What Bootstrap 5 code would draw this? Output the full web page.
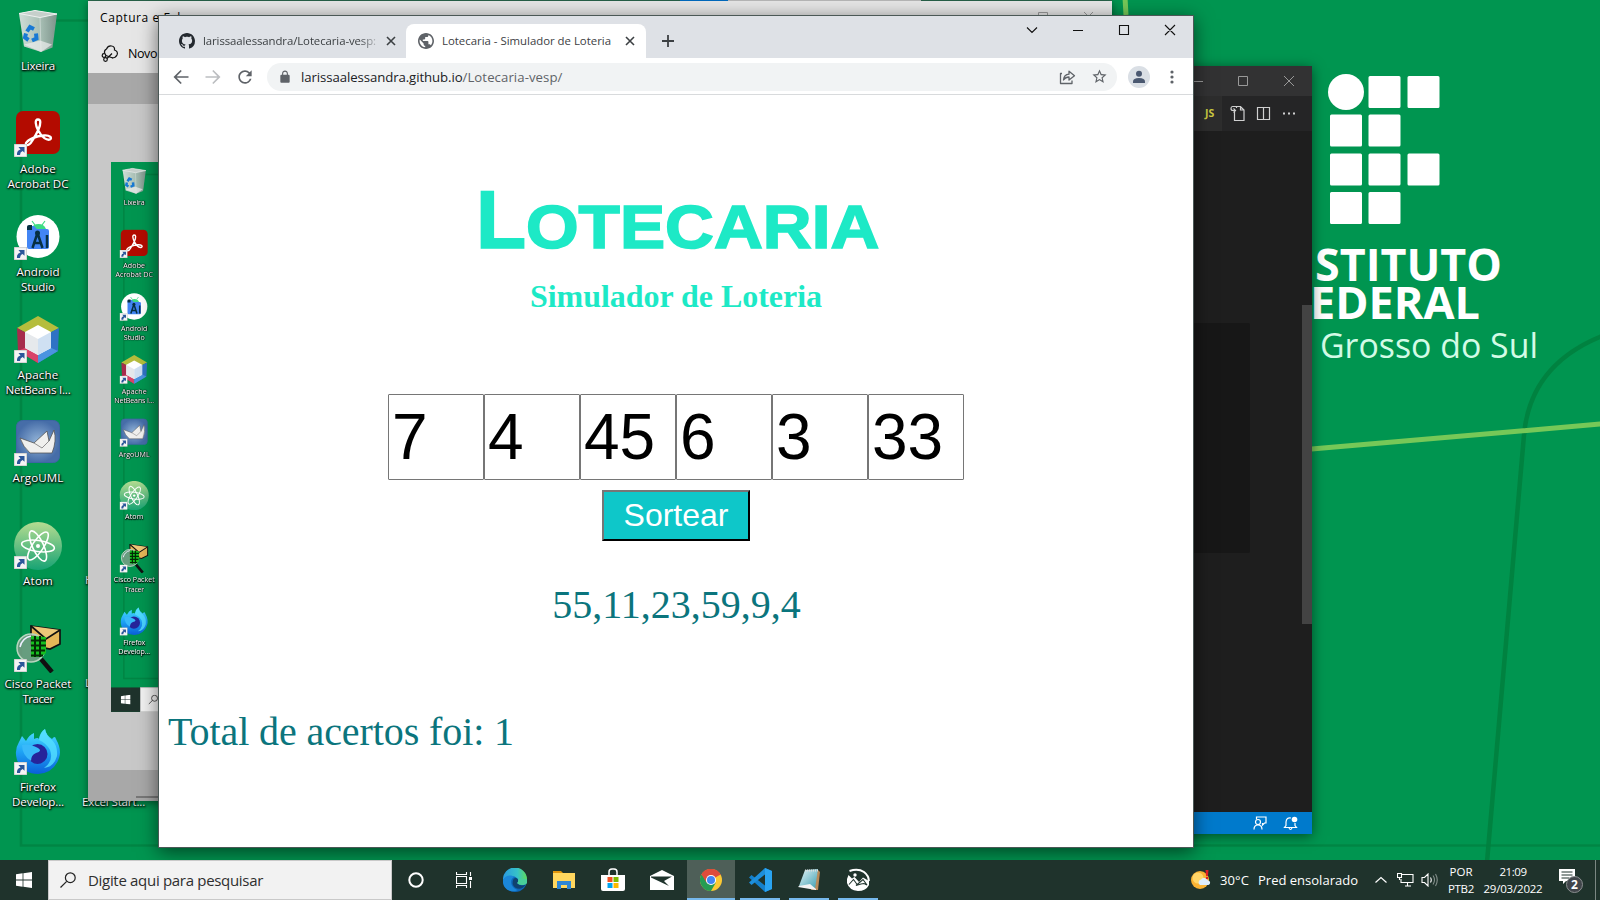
<!DOCTYPE html>
<html lang="pt-BR">
<head>
<meta charset="utf-8">
<title>Lotecaria - Simulador de Loteria</title>
<link href="https://cdn.jsdelivr.net/npm/bootstrap@5.3.0/dist/css/bootstrap.min.css" rel="stylesheet">
<style>
:root{--ui:"Open Sans","Noto Sans",sans-serif}
body{width:1600px;height:900px;overflow:hidden;background:#009550;font-family:var(--ui);font-size:12px;color:#000}
svg{display:block;flex:none}
.desk{width:1600px;height:860px;overflow:hidden}
.win{position:absolute;overflow:hidden}
.shots{width:76px;padding-top:7px}
.shot{height:103px;color:#fff;line-height:15px;text-align:center;font-size:11.6px;text-shadow:0 1px 2px #000,1px 1px 2px #000,0 0 2px rgba(0,0,0,.7);white-space:nowrap}
.shot .lbl{display:inline-block}
.shot .pic{height:48px;margin-bottom:3px}
.under{position:absolute;color:#fff;text-shadow:0 1px 2px #000,1px 1px 2px #000;line-height:15px;font-size:11.6px;white-space:nowrap}
.snip{left:88px;top:1px;width:1024px;height:800px;background:#c8c8c8;box-shadow:0 2px 8px rgba(0,0,0,.45)}
.snip-head{height:72px;background:#e6e6e6}
.snip-band{height:31px;background:#a8a8a8}
.snip-foot{height:31px;background:#a8a8a8}
.mini{position:absolute;left:23px;top:161px;width:600px;height:550px;overflow:hidden;background:#009550}
.mini-in{width:1600px;height:900px;transform:scale(.611);transform-origin:0 0}
.code{left:1000px;top:66px;width:312px;height:768px;background:#1e1e1e;box-shadow:0 2px 12px rgba(0,0,0,.5)}
.code-title{height:30px;background:#323233}
.code-tabs{height:35px;background:#252526}
.code-js{width:29px;background:#2d2d2d;color:#cbcb41;font:bold 10.5px/34px "Open Sans",sans-serif}
.code-map{position:absolute;left:0;top:257px;width:250px;height:230px;background:#171717;border-radius:2px}
.code-bar{position:absolute;right:0;top:239px;width:10px;height:319px;background:#434343}
.code-status{height:22px;background:#007acc}
.chrome{left:158px;top:15px;width:1036px;height:833px;background:#fff;border:1px solid #4b5856;box-shadow:0 4px 18px rgba(0,0,0,.55)}
.strip{height:42px;background:#dee1e6;color:#3c4043}
.ctab{height:34px;font-size:11.4px;white-space:nowrap}
.ctab.live{width:240px;background:#fff;border-radius:8px 8px 0 0}
.bar{height:36px;padding-top:1px}
.omni{width:850px;height:28px;border-radius:14px;background:#f1f3f4;font-size:13.2px;line-height:18px;color:#5f6368;white-space:nowrap}
.omni b{font-weight:400;color:#202124}
.site{border-top:1px solid #d8dadc;height:753px;font-family:"Liberation Serif",serif;color:#0b757d}
.title{font:bold 82px/90px "Liberation Sans",sans-serif;color:#1de9c6;margin:80px 0 0;height:90px;padding-left:2px;-webkit-text-stroke:1.6px #1de9c6}
.title span{display:inline-block;font-size:61.5px;transform:scaleX(1.1);transform-origin:0 0;width:352px;text-align:left;white-space:nowrap}
.subt{font-size:32px;line-height:36px;font-weight:bold;color:#1de9c6;margin:13px 0 0}
.num{width:96px;height:86px;border:1px solid #767676;border-radius:1px;padding:1px 2px 1px 3px;font:64px "Liberation Sans",sans-serif;color:#000;background:#fff}
.draw{margin-top:10px;width:148px;height:51px;padding:0;border:2px outset #000;border-color:#767676 #212121 #212121 #767676;background:#0ec7c9;color:#fff;font:32px "Liberation Sans",sans-serif}
.out{font-size:40px;line-height:46px;margin:0}
.task{width:1600px;height:40px;background:#1f332c;color:#fff}
.search{width:344px;height:40px;background:#f2f2f2;border:1px solid #c9c9c9;color:#2e2e2e;font-size:15px;white-space:nowrap}
.ti{width:48px;height:40px;margin-right:1px;position:relative}
.ti.on::after{content:"";position:absolute;left:4px;right:4px;bottom:0;height:2px;background:#76b9ed}
.ti.cur{background:#4e5f58}.ti.cur::after{left:0;right:0}
.tray{font-size:11.5px;white-space:nowrap}
</style>
</head>
<body>
<svg width="0" height="0" class="position-absolute">
<defs>
<linearGradient id="gBin" x1="0" x2="1"><stop offset="0" stop-color="#dfe3e2"/><stop offset=".55" stop-color="#b5c3bd"/><stop offset="1" stop-color="#86938f"/></linearGradient>
<linearGradient id="gAtom" x1="0" y1="0" x2="0" y2="1"><stop offset="0" stop-color="#b5dc91"/><stop offset="1" stop-color="#17a374"/></linearGradient>
<radialGradient id="gArgo"><stop offset="0" stop-color="#93b4d8"/><stop offset="1" stop-color="#466da8"/></radialGradient>
<linearGradient id="gFox" x1="0" y1="0" x2="0" y2="1"><stop offset="0" stop-color="#4fe0ff"/><stop offset=".5" stop-color="#1ea4f5"/><stop offset="1" stop-color="#0a5fd8"/></linearGradient>
<linearGradient id="gEdge" x1="0" y1="0" x2="1" y2="0"><stop offset="0" stop-color="#2a9ae0"/><stop offset=".6" stop-color="#36c2c8"/><stop offset="1" stop-color="#5fdc5a"/></linearGradient>
<linearGradient id="gNote" x1="0" y1="0" x2="1" y2="1"><stop offset="0" stop-color="#e6f6f8"/><stop offset="1" stop-color="#3a9db0"/></linearGradient>
<symbol id="link" viewBox="0 0 13 13"><rect width="13" height="13" fill="#f4f4f4" stroke="#b5b5b5"/><path d="M3 11Q2.500 6.500 6.500 5.500L4.500 3H10.500V8.800L8.600 7Q6 8 6 11Z" fill="#2b579a"/></symbol>
<symbol id="i-bin" viewBox="0 0 48 48"><g transform="translate(0 1.500)"><path d="M5 5 21 2 43 5.500 38.500 39 27 43.500 10 38Z" fill="url(#gBin)" fill-opacity=".93"/><path d="M5 5 21 2 43 5.500 26 9Z" fill="#c6cfcb" stroke="#eef1f0"/><path d="M26 9 27 43" stroke="#dfe5e3" stroke-width="1" opacity=".6"/><path d="M10 36 26 32 38 36 27 43.500Z" fill="#eee" opacity=".7"/><g fill="none" stroke="#1779d4" stroke-width="4"><path d="M13 23 16 18.500 20 20.500M22 25 22.500 30 18 32M14.500 31.500 11 29 12 25"/></g></g></symbol>
<symbol id="i-pdf" viewBox="0 0 48 48"><rect x="2" y="1" width="44" height="43" rx="7" fill="#b30b00"/><path d="M24 9.500C20.500 9.500 21.500 15 24 20 28 28 33 30.500 36 29.500 38.500 28 36 25 30 25.500 22 26 14 29.500 12 33 11 36 15 36.500 18 31 22 25 26.500 16 26.300 12 26.200 10 25.500 9.500 24 9.500Z" fill="none" stroke="#fff" stroke-width="2.300"/></symbol>
<symbol id="i-as" viewBox="0 0 48 48"><circle cx="24" cy="23.500" r="21.500" fill="#fff"/><path d="M17 16a8 7.500 0 0 1 15 0Z" fill="#3ddc84"/><path d="m18 8 3 4M31 8l-3 4" stroke="#3ddc84" stroke-width="1.200"/><path d="M13 17.500V15q0-2 2-2h5l3 3h10q2 0 2 2v16q0 2-2 2H15q-2 0-2-2Z" fill="#4285f4"/><path d="M13 17v-3q0-2 2-2h3v5Z" fill="#073042"/><path d="M23.500 20 18.500 35M23.500 20 28.500 35M19.500 30h8" fill="none" stroke="#073042" stroke-width="2.500"/><circle cx="23.500" cy="20" r="2.500" fill="#073042"/><path d="M33 22v13" stroke="#073042" stroke-width="2.500"/></symbol>
<symbol id="i-nb" viewBox="0 0 48 48"><path d="M24 0 45 12 24 23 3 12Z" fill="#b5bd3c"/><path d="M3 12 24 23V47L4 35Z" fill="#a72c4c"/><path d="M45 12 24 23V47L44 35Z" fill="#2f72c4"/><path d="M4 35 24 26V47Z" fill="#d94469"/><path d="M44 35 24 26V47Z" fill="#4b94e0"/><path d="M24 9 37 16V32L24 39 11 32V16Z" fill="#fff"/><path d="M24 23 37 16V32L24 39Z" fill="#cfe0f2"/><path d="M24 23 11 16V32L24 39Z" fill="#e6e9ec"/></symbol>
<symbol id="i-argo" viewBox="0 0 48 48"><rect x="2.500" y="1.500" width="43" height="42" rx="6" fill="url(#gArgo)" stroke="#3e66a3"/><path d="M6 19 20 24 33 12 35 22 40 11Q43 22 38 34H16Q9 28 6 19Z" fill="#f0f0ee" stroke="#555" stroke-width=".8"/><path d="M20 24 28 29 35 22" fill="none" stroke="#777" stroke-width=".8"/></symbol>
<symbol id="i-atom" viewBox="0 0 48 48"><circle cx="24" cy="24" r="24" fill="url(#gAtom)"/><g fill="none" stroke="#fff" stroke-width="1.600"><ellipse cx="24" cy="24" rx="16.500" ry="5.500" transform="rotate(8 24 24)"/><ellipse cx="24" cy="24" rx="16.500" ry="5.500" transform="rotate(65 24 24)"/><ellipse cx="24" cy="24" rx="16.500" ry="5.500" transform="rotate(-56 24 24)"/></g><circle cx="24" cy="24" r="2" fill="#fff"/></symbol>
<symbol id="i-cisco" viewBox="0 0 48 48"><path d="M17 1 46 5V19L36 24 17 20Z" fill="#e6b758" stroke="#111" stroke-width="1.700"/><path d="M17 1 32 14 46 5" fill="#edc878" stroke="#111" stroke-width="1.700"/><path d="m27 34 11 13" stroke="#111" stroke-width="4.500"/><circle cx="17" cy="23" r="14" fill="#8aa08f" fill-opacity=".75" stroke="#b8d5bf" stroke-width="1.500"/><path d="M17 11 32 12V28L27 32H17Z" fill="#16c020"/><path d="M17 15.500H32M17 20.500H32M17 25.500H31M17 30.500H29M21 11V32M26 11V32" stroke="#032b05" stroke-width="2"/><path d="M6 22Q8 13 17 11" stroke="#eef" stroke-width="1.500" fill="none"/></symbol>
<symbol id="i-fox" viewBox="0 0 48 48"><path d="M5 14 8 8 12 13Q15 7 20 5L20 11Q24 9 25 11 26 4 31 1 32 7 38 11 41 7 42 11 48 22 45 30 40 45 24 46 9 46 3 32 0 22 5 14Z" fill="url(#gFox)"/><path d="M31 1Q32 8 38 12 44 18 43 28 40 39 30 40 40 33 36 22 32 15 25 12 26 5 31 1Z" fill="#55e0ff" opacity=".8"/><circle cx="23.500" cy="26" r="10" fill="#26249a"/><path d="M8 17Q15 15 24 20 29 23 22 25 17 27 17 33 8 27 8 17Z" fill="#39b9fa"/></symbol>
<symbol id="i-win" viewBox="0 0 16 16"><path d="M0 2.200 6.600 1.300V7.600H0ZM7.400 1.200 16 0V7.600H7.400ZM0 8.400H6.600V14.700L0 13.800ZM7.400 8.400H16V16L7.400 14.800Z" fill="#fff"/></symbol>
<symbol id="i-mag" viewBox="0 0 16 16"><circle cx="10.300" cy="5.700" r="4.900" fill="none" stroke="#222" stroke-width="1.200"/><path d="M6.700 9.300.5 15.500" stroke="#222" stroke-width="1.200"/></symbol>
</defs>
</svg>

<div class="desk position-relative">
  <svg class="position-absolute top-0 start-0" width="1600" height="860">
    <g fill="none" stroke="#007f3e" stroke-opacity=".7"><path d="M1600 845.500H21V20.500H90" stroke-width="2.500"/><path d="M1487 862 1524 435Q1530 365 1602 336" stroke-width="4.500" stroke-opacity=".9"/></g>
    <path d="M1120-90 1126 15M1300 450 1601 424" stroke="#76c858" stroke-width="5" fill="none"/>
    <g fill="#fff">
      <circle cx="1346" cy="92" r="18"/>
      <path stroke="#fff" stroke-width="3" stroke-linejoin="round" d="M1370 77.500h29v29h-29zM1409 77.500h29v29h-29zM1331.500 116h29v29h-29zM1370 116h29v29h-29zM1331.500 155h29v29h-29zM1370 155h29v29h-29zM1409 155h29v29h-29zM1331.500 193.500h29v29h-29zM1370 193.500h29v29h-29z"/>
      <g font-family="Open Sans" font-weight="700" font-size="44.500"><text x="1315" y="280.500" textLength="187" lengthAdjust="spacingAndGlyphs">STITUTO</text><text x="1310" y="318.500" textLength="170" lengthAdjust="spacingAndGlyphs">EDERAL</text></g>
      <text x="1320" y="357.500" font-family="Open Sans" font-weight="400" font-size="34.500" fill="#d3fbe6" textLength="218" lengthAdjust="spacingAndGlyphs">Grosso do Sul</text>
    </g>
  </svg>
  <div class="shots position-absolute top-0 start-0" id="shots"></div>
  <span class="under" style="left:85px;top:572px">H</span>
  <span class="under" style="left:85px;top:675px">L</span>
  <span class="under" style="left:82px;top:794px"><span data-w="63">Excel Start...</span></span>

  <svg class="position-absolute top-0" style="left:88px" width="1024" height="1"><path d="M0 0H1024V1H0Z" fill="#2d6d50"/><path d="M592 0h48v1h-48z" fill="#0078d7"/><path d="M640 0h193v1h-193z" fill="#d0d0d0"/></svg>
  <section class="win snip d-flex flex-column">
    <div class="snip-head">
      <div style="padding:8px 0 0 12px;line-height:17px;height:35px" class="d-flex justify-content-between"><span class="text-nowrap" data-w="107">Captura e Esboço</span>
        <svg width="152" height="22" fill="none" stroke="#999"><path d="M78.500 3.500h9v9h-9zM124 3l9 9M133 3l-9 9"/></svg></div>
      <div class="d-flex align-items-center" style="padding:0 0 0 13px;height:34px">
        <svg width="18" height="18" viewBox="0 0 18 18" fill="none" stroke="#111" stroke-width="1.200"><path d="M3.500 9.500Q3 6 5.500 5 7 1.500 10.500 2 14 2.500 13.500 6 17.500 7.500 16 11 14.500 14 11 14"/><circle cx="3" cy="11.500" r="1.800"/><circle cx="4.500" cy="15.500" r="1.800"/><path d="m4.800 11.500 7 2.500M6 14.500l5-5"/></svg>
        <span style="font-size:12.500px;margin:2px 0 0 9px" data-w="29">Novo</span></div>
    </div>
    <div class="snip-band"></div>
    <div class="flex-grow-1"></div>
    <div class="snip-foot d-flex align-items-end"><svg width="200" height="5"><path d="M48 1h152" stroke="#777" stroke-width="2"/></svg></div>
    <div class="mini"><div class="mini-in d-flex flex-column">
      <div class="desk position-relative" style="flex:none"><svg class="position-absolute top-0 start-0" width="200" height="860"><path d="M200 845.500H21V20.500H200" fill="none" stroke="#007f3e" stroke-opacity=".7" stroke-width="2.500"/></svg><div class="shots position-relative" id="shotsMini"></div></div>
      <div class="task d-flex"><div class="ti d-flex align-items-center justify-content-center me-0"><svg width="16" height="16"><use href="#i-win"/></svg></div><div class="search d-flex align-items-center ps-2"><svg class="ms-1" width="16" height="16"><use href="#i-mag"/></svg></div></div>
    </div></div>
  </section>

  <section class="win code d-flex flex-column">
    <div class="code-title"><svg width="312" height="30" fill="none" stroke="#999"><path d="M193 15.500h10M238.500 10.500h9v9h-9zM284 10l10 10M294 10l-10 10"/></svg></div>
    <div class="code-tabs d-flex justify-content-end">
      <div class="code-js" style="padding-left:12px">JS</div>
      <svg width="90" height="35" fill="none" stroke="#d0d0d0" stroke-width="1.200"><path d="M12.500 16v8.500H22V14l-3.500-3.500H14M18.500 10.500V14H22M14.500 12V10.500H10.500Q9 10.500 9 12.500T11 14.500h2M11.500 12.500l2 2-2 2M35.500 11.500h12v12h-12zM41.500 11.500v12"/><path stroke-width="2" stroke-dasharray="2 3" d="M61 17.500h13"/></svg>
    </div>
    <div class="code-map"></div><div class="code-bar"></div>
    <div class="flex-grow-1"></div>
    <div class="code-status d-flex justify-content-end"><svg width="65" height="22" fill="none" stroke="#fff" stroke-width="1.200"><circle cx="11" cy="10" r="2.500"/><path d="M7 17.500q0-4.500 4-4.500t4 4.500M9.500 7.500V5H19v6h-1.500l-2 2V11"/><path d="M44 6q-4.500-1-5 4v3.500l-1.500 2h12l-1.500-2V11M42 16q1.500 3 3 0"/><circle cx="47.500" cy="7.500" r="2.800" fill="#fff" stroke="none"/></svg></div>
  </section>

  <section class="win chrome">
    <div class="strip d-flex">
      <div class="ctab d-flex align-items-center align-self-end" style="width:247px;padding-left:20px">
        <svg width="16" height="16" viewBox="0 0 16 16" fill="#24292f"><path d="M8 0C3.580 0 0 3.580 0 8c0 3.540 2.290 6.530 5.470 7.590.4.070.55-.17.55-.38 0-.19-.01-.82-.01-1.490-2.010.37-2.530-.49-2.690-.94-.09-.23-.48-.94-.82-1.130-.28-.15-.68-.52-.01-.53.63-.01 1.080.58 1.230.82.72 1.210 1.870.87 2.330.66.070-.52.28-.87.51-1.070-1.780-.2-3.640-.89-3.640-3.950 0-.87.31-1.590.82-2.150-.08-.2-.36-1.020.08-2.120 0 0 .67-.21 2.200.82.64-.18 1.320-.27 2-.27.68 0 1.360.09 2 .27 1.530-1.040 2.200-.82 2.200-.82.44 1.100.16 1.920.08 2.120.51.56.82 1.270.82 2.150 0 3.070-1.870 3.750-3.650 3.950.29.25.54.73.54 1.480 0 1.070-.01 1.930-.01 2.200 0 .21.15.46.55.38A8.012 8.012 0 0 0 16 8c0-4.420-3.580-8-8-8z"/></svg>
        <span class="ms-2" data-w="173" style="-webkit-mask-image:linear-gradient(90deg,#000 90%,rgba(0,0,0,.25))">larissaalessandra/Lotecaria-vesp:</span>
        <svg class="ms-auto" style="margin-right:10px" width="10" height="10" stroke="#3c4043" stroke-width="1.600"><path d="m1 1 8 8M9 1 1 9"/></svg>
      </div>
      <div class="ctab live d-flex align-items-center align-self-end" style="padding-left:12px">
        <svg width="16" height="16" viewBox="2 2 20 20" fill="#5f6368"><path d="M12 2C6.480 2 2 6.480 2 12s4.480 10 10 10 10-4.480 10-10S17.520 2 12 2zm-1 17.930c-3.950-.49-7-3.850-7-7.930 0-.62.08-1.210.21-1.790L9 15v1c0 1.100.9 2 2 2v1.930zm6.900-2.540c-.26-.81-1-1.390-1.900-1.390h-1v-3c0-.55-.45-1-1-1H8v-2h2c.55 0 1-.45 1-1V7h2c1.100 0 2-.9 2-2v-.41c2.930 1.190 5 4.060 5 7.410 0 2.080-.8 3.970-2.100 5.390z"/></svg>
        <span class="ms-2" data-w="169">Lotecaria - Simulador de Loteria</span>
        <svg class="ms-auto" style="margin-right:11px" width="10" height="10" stroke="#3c4043" stroke-width="1.600"><path d="m1 1 8 8M9 1 1 9"/></svg>
      </div>
      <svg class="align-self-end" style="margin:0 0 11px 16px" width="12" height="12" stroke="#3c4043" stroke-width="1.800"><path d="M6 0V12M0 6H12"/></svg>
      <svg class="ms-auto" width="170" height="28" fill="none" stroke="#111" stroke-width="1.100"><path d="m4 11.500 5 5 5-5M50 14.500h10M96.500 9.500h9v9h-9zM142 9l10 10M152 9l-10 10"/></svg>
    </div>
    <div class="bar d-flex align-items-center">
      <svg style="margin-left:12px" width="20" height="20" viewBox="0 0 24 24" fill="#5f6368"><path d="M21 11H6.830l6.090-6.090L11.500 3.500l-8.500 8.500 8.500 8.500 1.410-1.410L6.830 13H21v-2z"/></svg>
      <svg style="margin-left:12px" width="20" height="20" viewBox="0 0 24 24" fill="#bcbec1"><path transform="matrix(-1 0 0 1 24 0)" d="M21 11H6.830l6.090-6.090L11.500 3.500l-8.500 8.500 8.500 8.500 1.410-1.410L6.830 13H21v-2z"/></svg>
      <svg style="margin-left:12px" width="20" height="20" viewBox="0 0 24 24" fill="#5f6368"><path d="M17.650 6.350A7.958 7.958 0 0 0 12 4c-4.420 0-7.990 3.580-7.990 8s3.570 8 7.990 8c3.730 0 6.840-2.550 7.730-6h-2.080A5.990 5.990 0 0 1 12 18c-3.310 0-6-2.690-6-6s2.690-6 6-6c1.660 0 3.140.69 4.220 1.780L13 11h7V4l-2.350 2.350z"/></svg>
      <div class="omni d-flex align-items-center" style="margin-left:12px">
        <svg style="margin-left:11px" width="14" height="14" viewBox="0 0 24 24" fill="#5f6368"><path d="M18 8h-1V6c0-2.760-2.240-5-5-5S7 3.240 7 6v2H6c-1.100 0-2 .9-2 2v10c0 1.100.9 2 2 2h12c1.100 0 2-.9 2-2V10c0-1.100-.9-2-2-2zM8.900 6c0-1.710 1.390-3.100 3.100-3.100s3.100 1.390 3.100 3.100v2H8.900V6z"/></svg>
        <span style="margin-left:9px"><b data-w="161.500">larissaalessandra.github.io</b><span data-w="100">/Lotecaria-vesp/</span></span>
        <svg class="ms-auto" width="17" height="16" viewBox="0 0 17 16" fill="none" stroke="#5f6368" stroke-width="1.300"><path d="M3 4.500H1.500V14.500H13V11.500M4.500 11Q5 5.500 10 5.200V2.200L15.500 6.700 10 11V8Q6.500 8 4.500 11Z" stroke-linejoin="round"/></svg>
        <svg style="margin:0 9px 0 15px" width="17" height="17" viewBox="0 0 24 24" fill="#5f6368"><path d="M22 9.240l-7.190-.62L12 2 9.190 8.630 2 9.240l5.460 4.730L5.820 21 12 17.270 18.180 21l-1.630-7.030L22 9.240zM12 15.400l-3.760 2.270 1-4.280-3.320-2.880 4.380-.38L12 6.100l1.710 4.040 4.380.38-3.320 2.880 1 4.280L12 15.400z"/></svg>
      </div>
      <svg style="margin-left:11px" width="22" height="22"><circle cx="11" cy="11" r="11" fill="#dadfe5"/><circle cx="11" cy="7.800" r="3" fill="#4a5870"/><path d="M5 17v-1.500q0-3.500 6-3.500t6 3.500V17Z" fill="#4a5870"/></svg>
      <svg style="margin-left:20px" width="4" height="16" fill="#5f6368"><circle cx="2" cy="3" r="1.600"/><circle cx="2" cy="8" r="1.600"/><circle cx="2" cy="13" r="1.600"/></svg>
    </div>
    <main class="site d-flex flex-column align-items-center">
      <h1 class="title text-nowrap">L<span>OTECARIA</span></h1>
      <h2 class="subt"><span data-w="292">Simulador de Loteria</span></h2>
      <form class="d-flex" style="margin-top:80px" onsubmit="return false">
        <input class="num" value="7"><input class="num" value="4"><input class="num" value="45"><input class="num" value="6"><input class="num" value="3"><input class="num" value="33">
      </form>
      <button class="draw" type="button">Sortear</button>
      <p class="out" style="margin-top:41px;padding-left:1px">55,11,23,59,9,4</p>
      <p class="out align-self-start" style="margin:81px 0 0 9px"><span data-w="346">Total de acertos foi: 1</span></p>
    </main>
  </section>
</div>

<footer class="task d-flex">
  <div class="ti me-0 d-flex align-items-center justify-content-center"><svg width="16" height="16"><use href="#i-win"/></svg></div>
  <div class="search d-flex align-items-center"><svg style="margin-left:11px" width="16" height="16"><use href="#i-mag"/></svg><span style="margin-left:12px" data-w="175">Digite aqui para pesquisar</span></div>
  <div class="ti me-0 d-flex align-items-center justify-content-center"><svg width="18" height="18"><circle cx="9" cy="9" r="6.700" fill="none" stroke="#fff" stroke-width="2"/></svg></div>
  <div class="ti d-flex align-items-center justify-content-center" style="margin-right:3px"><svg width="17" height="16" fill="none" stroke="#fff" stroke-width="1.100"><path d="M.5 0V2.500H10.500V0M.5 4.500h10v7H.5zM.5 16V13.500H10.500V16M14.500 0V4M14.500 9V16"/><path d="M13 5h3v3h-3z" fill="#fff" stroke="none"/></svg></div>
  <div class="ti d-flex align-items-center justify-content-center"><svg width="24" height="24" viewBox="0 0 24 24"><circle cx="12" cy="12" r="12" fill="#0d66b8"/><path d="M0 12A12 12 0 0 1 24 11C24.300 16 19 17.500 15 16 13.500 15 15.500 14 15.200 12 14.500 8 5 6 0 12Z" fill="url(#gEdge)"/><path d="M0 12C3 6 9 7 12 9 6 10 7 20 15 22 6 26-1 19 0 12Z" fill="#1b87d8"/><path d="M10.500 11Q13 9 15 11.500 15.500 14 14 15 17 19 23 16.500 18 23 12 19.500 8 16 10.500 11Z" fill="#10426f"/><path d="M15.300 12.500Q15 14.500 14 15 17 18.500 23 16.200L24 15V11H16Z" fill="#48cf9a"/></svg></div>
  <div class="ti d-flex align-items-center justify-content-center"><svg width="22" height="20" viewBox="0 0 22 20"><path d="M0 1h8l2 2H0z" fill="#e0950c"/><path d="M0 3h22v15H0Z" fill="#ffd75e"/><path d="M4 19v-8h14v8h-4v-4H8v4Z" fill="#2e86d4"/></svg></div>
  <div class="ti d-flex align-items-center justify-content-center"><svg width="24" height="24" viewBox="0 0 24 24"><path d="M0 7H24V21Q24 23 22 23H2Q0 23 0 21Z" fill="#fff"/><path d="M8 7V4Q8 1 11 1H13Q16 1 16 4V7" fill="none" stroke="#fff" stroke-width="1.500"/><path d="M6.500 9h5v5h-5z" fill="#f25022"/><path d="M12.500 9h5v5h-5z" fill="#7fba00"/><path d="M6.500 15h5v5h-5z" fill="#00a4ef"/><path d="M12.500 15h5v5h-5z" fill="#ffb900"/></svg></div>
  <div class="ti d-flex align-items-center justify-content-center"><svg width="24" height="20" viewBox="0 0 24 20"><path d="M0 6 12 0 24 6V20H0Z" fill="#fff"/><path d="M1 6.500H22L14 11 19 16 1 7.500Z" fill="#1f332c"/></svg></div>
  <div class="ti on cur d-flex align-items-center justify-content-center"><svg width="22" height="22" viewBox="0 0 24 24"><circle cx="12" cy="12" r="12" fill="#fbc934"/><path d="M12 12 1.600 6A12 12 0 0 1 22.400 6Z" fill="#de4b3b"/><path d="M1.600 6A12 12 0 0 0 12 24L17.200 15 12 12Z" fill="#259c53"/><path d="M12 6.500H22.600A12 12 0 0 0 1.600 6L7.200 15Z" fill="#de4b3b"/><circle cx="12" cy="12" r="5.500" fill="#fff"/><circle cx="12" cy="12" r="4.400" fill="#4285f4"/></svg></div>
  <div class="ti on d-flex align-items-center justify-content-center"><svg width="24" height="24" viewBox="0 0 24 24"><path d="M17 0 24 3V21L17 24 1 9.500 3.500 7 17 17.500Z" fill="#1480cc"/><path d="M17 6.500 3.500 17 1 14.500 17 0Z" fill="#1d8fdc"/><path d="M17 0 24 3V21L17 24Z" fill="#2aa4f2"/></svg></div>
  <div class="ti on d-flex align-items-center justify-content-center"><svg width="24" height="24" viewBox="0 0 24 24"><path d="M21 2 23 4 21 22H14Z" fill="#b98b5a"/><path d="M8 2 21 1 18 21 2 18Z" fill="url(#gNote)"/><path d="M2 18 13 16 19 21V22L1 19Z" fill="#f3f3f3"/><path d="M8 2.500h13" stroke="#ddd" stroke-width="2" stroke-dasharray="1 1"/></svg></div>
  <div class="ti on d-flex align-items-center justify-content-center"><svg width="24" height="24" viewBox="0 0 24 24"><path d="M3.500 3Q12 0 18 4 23 8 22.800 13" fill="none" stroke="#fff" stroke-width="2"/><path d="M1 11 2.500 7 6 10.500 8.500 9 13 14 17 9.500 23 13V17Q20 23 12 23 3 22 1 15Z" fill="#fff"/><path d="M3 16.500 7.500 11.500 11.500 17M10 17.500 17 11.500 21 17 18 15.500 15 16Z" fill="none" stroke="#1f332c" stroke-width="1.100"/><circle cx="9" cy="7" r="1.700" fill="#fff"/></svg></div>
  <div class="tray d-flex align-items-center ms-auto" style="width:409px">
    <svg width="20" height="20" viewBox="0 0 20 20"><circle cx="9" cy="10" r="9" fill="#f9b233"/><circle cx="7" cy="8" r="5.500" fill="#ffd668"/><path d="M9 15a3 3 0 0 1 1-5.500 4 4 0 0 1 7 1 2.300 2.300 0 0 1 .5 4.500Z" fill="#dcecfb"/><path d="M14.500 0h3l-.6 6h-1.800Z" fill="#e01b24"/><circle cx="16" cy="8" r="1.200" fill="#e01b24"/></svg>
    <span style="margin-left:9px;font-size:13px;padding-top:1px" data-w="29">30°C</span>
    <span style="margin-left:9px;font-size:13px;padding-top:2px" data-w="100">Pred ensolarado</span>
    <svg style="margin-left:17px" width="12" height="8"><path d="m.5 6.500 5.500-5 5.500 5" fill="none" stroke="#fff" stroke-width="1.200"/></svg>
    <svg style="margin-left:10px" width="17" height="14" fill="none" stroke="#fff" stroke-width="1.100"><path d="M5 1.500h11v8H4V6M8 13h6M10.500 9.500V13M.5.5h4v4h-4zM2.500 4.500V7"/></svg>
    <svg style="margin-left:7px" width="18" height="14" fill="none" stroke="#fff" stroke-width="1.100"><path d="M1 4.500h2.500L7 1v12L3.500 9.500H1ZM9.500 4.500q1.500 2.500 0 5"/><path d="M12 2.500q3 4.500 0 9M14.500 1q3.500 6 0 12" opacity=".45"/></svg>
    <div class="d-flex flex-column align-items-center" style="margin-left:8px;width:28px;line-height:17px"><span data-w="23">POR</span><span data-w="26">PTB2</span></div>
    <div class="d-flex flex-column align-items-center" style="margin-left:8px;width:60px;line-height:17px"><span data-w="27">21:09</span><span data-w="59">29/03/2022</span></div>
    <svg style="margin-left:15px" width="27" height="26"><path d="M1 2H17V14H8L5 17V14H1Z" fill="#fff"/><path d="M3.500 5h11M3.500 8h11M3.500 11h8" stroke="#1f332c"/><circle cx="16.500" cy="17.500" r="8" fill="#40454a" stroke="#8a8f90"/><text x="16.500" y="22" text-anchor="middle" font-size="12" font-weight="700" fill="#fff">2</text></svg>
    <i class="ms-auto" style="width:5px;height:40px;border-left:1px solid #7b8783"></i>
  </div>
</footer>

<script src="https://cdn.jsdelivr.net/npm/bootstrap@5.3.0/dist/js/bootstrap.bundle.min.js"></script>
<script>
// desktop shortcuts: icon, label lines with their widths, shortcut arrow
const items=[['bin',[['Lixeira',34]],0],['pdf',[['Adobe',36],['Acrobat DC',61]],1],['as',[['Android',43],['Studio',34]],1],['nb',[['Apache',41],['NetBeans I...',65]],1],['argo',[['ArgoUML',51]],1],['atom',[['Atom',30]],1],['cisco',[['Cisco Packet',67],['Tracer',31]],1],['fox',[['Firefox',36],['Develop...',52]],1]];
const html=items.map(([id,ls,a])=>`<div class="shot"><div class="pic d-flex justify-content-center"><svg width="48" height="48"><use href="#i-${id}"/>${a?'<use href="#link" x="0" y="34" width="13" height="13"/>':''}</svg></div>${ls.map(l=>`<div><span class="lbl" data-w="${l[1]}">${l[0]}</span></div>`).join('')}</div>`).join('');
shots.innerHTML=html;shotsMini.innerHTML=html;
// tune tracking so each label takes its nominal width
document.querySelectorAll('[data-w]').forEach(e=>{
  const r=document.createRange();r.selectNodeContents(e);
  let w=r.getBoundingClientRect().width;
  if(e.closest('.mini'))w/=.611;
  e.style.letterSpacing=((e.dataset.w-w)/e.textContent.length).toFixed(3)+'px';
});
</script>
</body>
</html>
